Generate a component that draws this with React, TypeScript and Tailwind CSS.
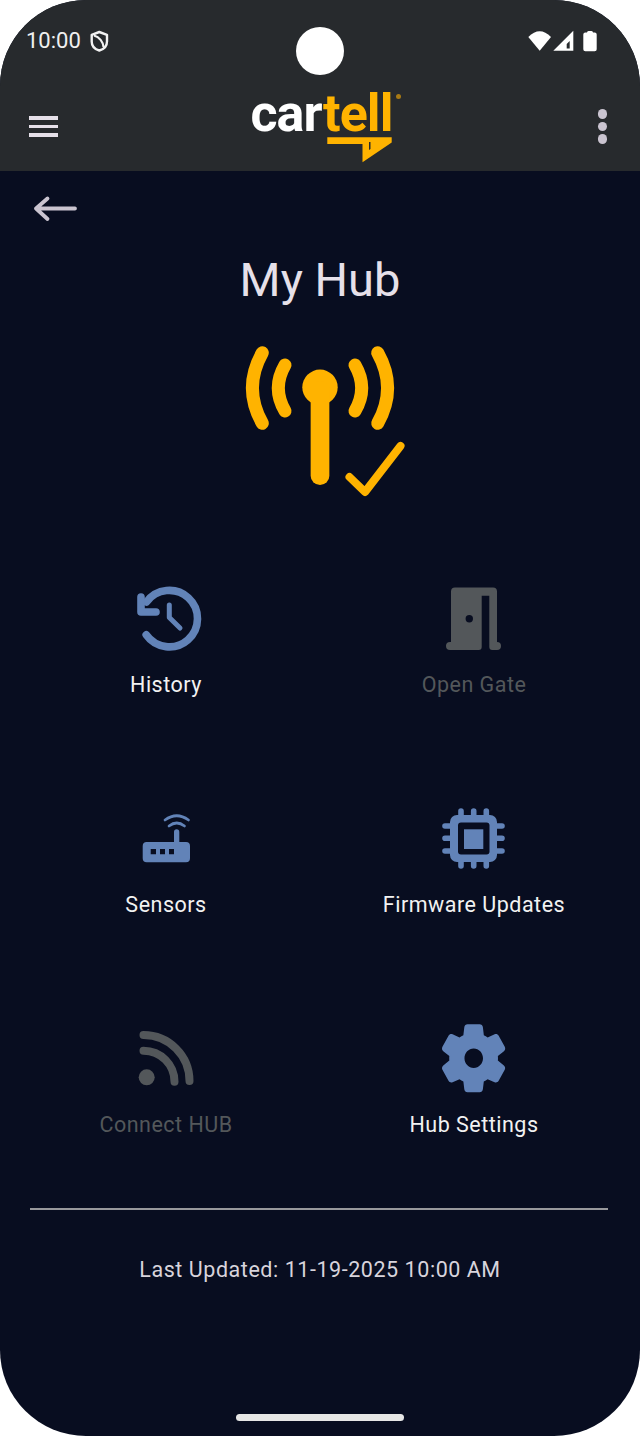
const BLUE = '#6283b8';
const GREY = '#53575a';
const AMBER = '#ffb300';

function HistoryIcon() {
    return (
        <svg viewBox="126 580 80 80" className="w-20 h-20">
            <g fill="none" stroke={BLUE} strokeLinecap="round" strokeLinejoin="round">
                <path d="M146.200 634.800 A28.200 28.200 0 1 0 146.500 602" strokeWidth="7.600" />
                <path d="M141 597 V612 H156" strokeWidth="7.600" />
                <path d="M169.300 605 V617.500 L180 628" strokeWidth="5" />
            </g>
        </svg>
    );
}

function DoorIcon() {
    return (
        <svg viewBox="434 580 80 80" className="w-20 h-20">
            <path fill={GREY} d="M451 642 V591.500 a4 4 0 0 1 4-4 H493 a4 4 0 0 1 4 4 V642 H489.300 V595.700 H481.700 V647 a3 3 0 0 1-3 3 H450 a4 4 0 0 1 0-8 Z" />
            <path fill={GREY} d="M489.300 642 H497 a4 4 0 0 1 0 8 H492.300 a3 3 0 0 1-3-3 Z" />
            <circle cx="469.300" cy="618.700" r="3.700" fill="#080d20" />
        </svg>
    );
}

function RouterIcon() {
    return (
        <svg viewBox="126 800 80 80" className="w-20 h-20">
            <path fill={BLUE} fillRule="evenodd" d="M174 842 V832 a2.650 2.650 0 0 1 5.300 0 V842 H186 a4 4 0 0 1 4 4 V858.300 a4 4 0 0 1-4 4 H146.700 a4 4 0 0 1-4-4 V846 a4 4 0 0 1 4-4 Z M150.700 849 V854.300 H156 V849 Z M160 849 V854.300 H165 V849 Z M169 849 V854.300 H174 V849 Z" />
            <g fill="none" stroke={BLUE} strokeWidth="2.700" strokeLinecap="round">
                <path d="M165 820 Q176.700 811.500 188.500 820" />
                <path d="M169 826 Q176.700 820 184.500 826" />
            </g>
        </svg>
    );
}

function ChipIcon() {
    return (
        <svg viewBox="434 800 80 80" className="w-20 h-20">
            <g stroke={BLUE} strokeWidth="5.600" strokeLinecap="round">
                <path d="M461 811 V866 M473.700 811 V866 M486.300 811 V866" />
                <path d="M445 826 H502 M445 838.300 H502 M445 851 H502" />
            </g>
            <rect x="450" y="815" width="47" height="47" rx="7" fill={BLUE} />
            <rect x="458" y="822.500" width="31.500" height="32" rx="3" fill="#080d20" />
            <rect x="464" y="829.300" width="19.300" height="19.700" fill={BLUE} />
        </svg>
    );
}

function RssIcon() {
    return (
        <svg viewBox="126 1020 80 80" className="w-20 h-20">
            <circle cx="146.700" cy="1077.300" r="8" fill={GREY} />
            <g fill="none" stroke={GREY} strokeWidth="8" strokeLinecap="round">
                <path d="M143.500 1050.700 A31 31 0 0 1 174.500 1081.700" />
                <path d="M143.500 1035 A46 46 0 0 1 189.500 1081" />
            </g>
        </svg>
    );
}

function GearIcon() {
    return (
        <svg viewBox="434 1020 80 80" className="w-20 h-20">
            <g transform="translate(434.600 1017.500) scale(3.250 3.400)">
                <path fill={BLUE} fillRule="evenodd" d="M19.500 12c0-.23-.01-.45-.03-.68l1.860-1.410c.4-.3.510-.86.260-1.300l-1.870-3.230c-.25-.44-.79-.62-1.250-.42l-2.150.91c-.37-.26-.76-.49-1.170-.68l-.29-2.310c-.06-.5-.49-.88-.99-.88h-3.730c-.51 0-.94.38-1 .88l-.29 2.310c-.41.19-.8.42-1.170.68l-2.150-.91c-.46-.2-1-.02-1.250.42L2.410 8.620c-.25.44-.14.99.26 1.300l1.860 1.410c-.02.22-.03.44-.03.67s.01.45.03.68l-1.860 1.410c-.4.3-.51.86-.26 1.300l1.870 3.230c.25.44.79.62 1.250.42l2.150-.91c.37.26.76.49 1.170.68l.29 2.310c.06.5.49.88.99.88h3.730c.5 0 .93-.38.99-.88l.29-2.310c.41-.19.8-.42 1.170-.68l2.150.91c.46.2 1 .02 1.250-.42l1.870-3.230c.25-.44.14-.99-.26-1.300l-1.860-1.410c.03-.23.04-.45.04-.68zM12.040 14.850c-1.570 0-2.850-1.280-2.850-2.850s1.280-2.850 2.850-2.850 2.850 1.280 2.850 2.850-1.280 2.850-2.850 2.850z" />
            </g>
        </svg>
    );
}

function HubIcon() {
    return (
        <svg viewBox="230 340 180 160" className="w-[180px] h-40">
            <circle cx="320" cy="387.300" r="17.700" fill={AMBER} />
            <g fill="none" stroke={AMBER} strokeLinecap="round" strokeLinejoin="round">
                <path d="M320 390 V475.700" strokeWidth="18.700" />
                <path d="M285 365 Q271.600 388 285 411" strokeWidth="13" />
                <path d="M262.300 352.700 Q242.500 388 262.300 423.300" strokeWidth="13" />
                <path d="M355 365 Q368.400 388 355 411" strokeWidth="13" />
                <path d="M377.700 352.700 Q397.500 388 377.700 423.300" strokeWidth="13" />
                <path d="M349.500 477 L365 492 L400.500 446" strokeWidth="8" />
            </g>
        </svg>
    );
}

function StatusIcons() {
    return (
        <svg viewBox="526 28 74 28" className="w-[74px] h-7">
            <path fill="#fff" d="M539.700 51.700 L528.300 38 Q539.700 26.500 551 38 Z" />
            <path fill="#fff" d="M553.300 51.700 L573.300 31.700 V51.700 Z" />
            <path fill="#272a2d" d="M566.700 45 L569.700 42 V49.500 H566.700 Z" />
            <path fill="#fff" d="M587 33.500 a1.500 1.500 0 0 1 1.500-1.500 h3 a1.500 1.500 0 0 1 1.500 1.500 h1.700 a2 2 0 0 1 2 2 V50.300 a2 2 0 0 1-2 2 H585.300 a2 2 0 0 1-2-2 V35.500 a2 2 0 0 1 2-2 Z" />
        </svg>
    );
}

function ShieldIcon() {
    return (
        <svg viewBox="88 30 21 24" className="w-[21px] h-6">
            <path fill="none" stroke="#f2f2f2" strokeWidth="2.400" strokeLinejoin="round" d="M98.300 33 L106 35.800 V42.500 C106 47 103 50.200 98.300 51.500 C93.600 50.200 90.700 47 90.700 42.500 V35.800 Z" />
            <path fill="none" stroke="#f2f2f2" strokeWidth="2.200" d="M93 36.500 C98.500 38 102 43 102.500 48" />
        </svg>
    );
}

type MenuItem = {
    label: string;
    icon: React.ReactNode;
    disabled?: boolean;
}

const items: MenuItem[] = [
    { label: 'History', icon: <HistoryIcon /> },
    { label: 'Open Gate', icon: <DoorIcon />, disabled: true },
    { label: 'Sensors', icon: <RouterIcon /> },
    { label: 'Firmware Updates', icon: <ChipIcon /> },
    { label: 'Connect HUB', icon: <RssIcon />, disabled: true },
    { label: 'Hub Settings', icon: <GearIcon /> },
];

export default function App() {
    return (
        <div className="w-[640px] h-[1436px] bg-white font-['Roboto',sans-serif]">
            <div className="relative w-full h-full rounded-[86px] overflow-hidden bg-[#080d20]">
                <div className="h-[171px] bg-[#272a2d]">
                    <div className="h-[82px] flex items-center justify-between pl-[26px] pr-[40px]">
                        <div className="flex items-center gap-[8px]">
                            <span className="text-[22px] leading-7 text-[#f0f0f0]">10:00</span>
                            <ShieldIcon />
                        </div>
                        <StatusIcons />
                    </div>
                    <div className="h-[89px] grid grid-cols-[1fr_auto_1fr] items-center pl-[29px] pr-[33px]">
                        <div className="flex flex-col gap-[5px] w-[29px]">
                            <div className="h-[3.500px] bg-[#e6e0e9]" />
                            <div className="h-[3.500px] bg-[#e6e0e9]" />
                            <div className="h-[3.500px] bg-[#e6e0e9]" />
                        </div>
                        <div className="relative flex flex-col pl-[7px] -mt-[1px]">
                            <div className="text-[52px] leading-[50px] font-bold tracking-[-0.900px]">
                                <span className="text-white">car</span>
                                <span className="text-[#ffb300]">tell</span>
                            </div>
                            <svg viewBox="327 137 65 26" className="w-[65px] h-[26px] ml-[77px] -mt-[2px]">
                                <path fill="#ffb300" d="M327.300 137.300 H391.700 V142.500 L362.500 162.300 V144 H327.300 Z" />
                                <path fill="#272a2d" d="M369 142 H370.500 V149 L369 150 Z" />
                            </svg>
                            <div className="absolute right-[-8px] top-[5px] w-[5px] h-[5px] rounded-full bg-[#a87a14]" />
                        </div>
                        <div className="flex flex-col gap-[3px] justify-self-end">
                            <div className="w-[9.500px] h-[9.500px] rounded-full bg-[#cac4d0]" />
                            <div className="w-[9.500px] h-[9.500px] rounded-full bg-[#cac4d0]" />
                            <div className="w-[9.500px] h-[9.500px] rounded-full bg-[#cac4d0]" />
                        </div>
                    </div>
                </div>

                <div className="flex flex-col">
                    <svg viewBox="30 192 52 34" className="w-[52px] h-[34px] ml-[30px] mt-[21px]">
                        <path fill="none" stroke="#cac4d0" strokeWidth="3.800" strokeLinecap="round" strokeLinejoin="round" d="M47.500 198.500 L36 208.500 L47.500 219 M36 208.500 H75" />
                    </svg>
                    <h1 className="mt-[26px] text-center text-[47px] leading-[56px] text-[#e6e0e9]">My Hub</h1>
                    <div className="mt-8 flex justify-center">
                        <HubIcon />
                    </div>
                    <div className="mt-20 px-3 grid grid-cols-2 gap-y-[101px]">
                        {items.map((item, index) => (
                            <div key={index} className="flex flex-col items-center gap-[11px]">
                                {item.icon}
                                <span className={`text-[21.500px] leading-7 tracking-[0.500px] ${item.disabled ? 'text-[#53575a]' : 'text-[#f2f2f2]'}`}>{item.label}</span>
                            </div>
                        ))}
                    </div>
                    <div className="mt-[69px] ml-[30px] w-[578px] h-[2px] bg-[#98989c]" />
                    <p className="mt-[46px] text-center text-[21.500px] leading-7 tracking-[0.550px] text-[#d8d4dc]">Last Updated: 11-19-2025 10:00 AM</p>
                </div>

                <div className="absolute left-[296px] top-[27px] w-12 h-12 rounded-full bg-white" />
                <div className="absolute left-[236px] top-[1414px] w-[168px] h-[7px] rounded-full bg-[#e6e6e6]" />
            </div>
        </div>
    );
}
